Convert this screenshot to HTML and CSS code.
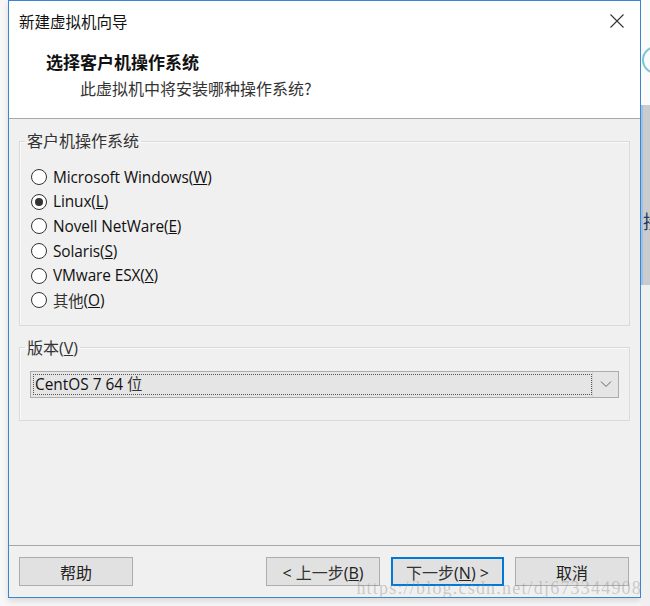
FILE: index.html
```html
<!DOCTYPE html>
<html lang="zh-CN">
<head>
  <meta charset="UTF-8" />
  <title>新建虚拟机向导</title>
  <link rel="stylesheet" href="styles.css">
</head>
<body>
  <div class="desktop">
    <div class="gutter"></div>

    <div class="window">
      <div class="titlebar">
        <span class="title">新建虚拟机向导</span>
        <button class="close-btn" aria-label="关闭">
          <svg width="14" height="14" viewBox="0 0 14 14">
            <path d="M0.5 0.5 L13.5 13.5 M13.5 0.5 L0.5 13.5" stroke="#333" stroke-width="1.1" fill="none"/>
          </svg>
        </button>
      </div>

      <div class="header">
        <div class="heading">选择客户机操作系统</div>
        <div class="subheading">此虚拟机中将安装哪种操作系统?</div>
      </div>

      <div class="content">
        <fieldset class="group">
          <legend>客户机操作系统</legend>
          <label class="radio"><span class="dot"></span>Microsoft Windows(<u>W</u>)</label>
          <label class="radio"><span class="dot checked"></span>Linux(<u>L</u>)</label>
          <label class="radio"><span class="dot"></span>Novell NetWare(<u>E</u>)</label>
          <label class="radio"><span class="dot"></span>Solaris(<u>S</u>)</label>
          <label class="radio"><span class="dot"></span>VMware ESX(<u>X</u>)</label>
          <label class="radio"><span class="dot"></span><span class="cjk">其他</span>(<u>O</u>)</label>
        </fieldset>

        <fieldset class="group version">
          <legend><span class="cjk">版本</span>(<u>V</u>)</legend>
          <div class="combo">
            <div class="combo-text">CentOS 7 64 <span class="cjk">位</span></div>
            <div class="combo-arrow">
              <svg width="12" height="8" viewBox="0 0 12 8">
                <path d="M1 1.5 L6 6.5 L11 1.5" stroke="#666" stroke-width="1" fill="none"/>
              </svg>
            </div>
          </div>
        </fieldset>
      </div>

      <div class="footer">
        <button class="btn">帮助</button>
        <div class="spacer"></div>
        <button class="btn">&lt; <span class="cjk">上一步</span>(<u>B</u>)</button>
        <button class="btn primary"><span class="cjk">下一步</span>(<u>N</u>) &gt;</button>
        <button class="btn">取消</button>
        <div class="watermark">https://blog.csdn.net/dj673344908</div>
      </div>
    </div>

    <div class="side">
      <div class="side-top"><div class="ring"></div></div>
      <div class="side-gray"><span class="side-char">接</span></div>
      <div class="side-rest"></div>
    </div>
  </div>
</body>
</html>
```

FILE: styles.css
```css
body {
  margin: 0;
  background: #f6f6f6;
  font-family: "Open Sans", "Noto Sans CJK SC", sans-serif;
  color: #000;
}

.desktop {
  width: 650px;
  height: 606px;
  display: flex;
  overflow: hidden;
}

.gutter {
  width: 8px;
  flex: none;
  background: #f7f7f7;
}

.window {
  width: 633px;
  height: 598px;
  flex: none;
  box-sizing: border-box;
  border: 1px solid #3b86d4;
  background: #f0f0f0;
  display: flex;
  flex-direction: column;
  box-shadow: 0 3px 6px rgba(0, 0, 0, 0.12);
}

/* title bar + header */

.titlebar {
  height: 39px;
  background: #fff;
  display: flex;
  align-items: center;
  padding-left: 10px;
}

.title {
  font-family: "Noto Sans CJK SC", sans-serif;
  font-size: 15.5px;
  color: #111;
  flex: 1;
}

.close-btn {
  background: none;
  border: none;
  padding: 0;
  width: 46px;
  height: 39px;
  display: flex;
  align-items: center;
  justify-content: center;
}

.header {
  height: 78px;
  background: #fff;
  border-bottom: 1px solid #a8a8a8;
  padding-left: 37px;
}

.heading {
  font-family: "Noto Sans CJK SC", sans-serif;
  font-weight: bold;
  font-size: 17px;
  line-height: 24px;
  margin-top: 10px;
  color: #111;
}

.subheading {
  font-family: "Noto Sans CJK SC", sans-serif;
  font-size: 16px;
  line-height: 24px;
  margin-top: 2px;
  padding-left: 34px;
  color: #333;
}

/* body */

.content {
  flex: 1;
  padding: 12px 10px 0 10px;
}

.group {
  margin: 0;
  padding: 14px 11px 12px 11px;
  border: 1px solid #dadada;
  box-shadow: inset 1px 1px 0 #fafafa;
}

.group legend {
  font-size: 16px;
  line-height: 20px;
  padding: 0 2px;
  margin-left: -6px;
  color: #333;
}

.cjk {
  font-family: "Noto Sans CJK SC", sans-serif;
  color: #333;
}

.radio {
  display: flex;
  align-items: center;
  height: 24.6px;
  font-size: 15.4px;
  letter-spacing: -0.1px;
  color: #111;
}

.dot {
  width: 14px;
  height: 14px;
  border: 1px solid #333;
  border-radius: 50%;
  background: #fff;
  margin-right: 6px;
  display: flex;
  align-items: center;
  justify-content: center;
}

.dot.checked::after {
  content: "";
  width: 8px;
  height: 8px;
  border-radius: 50%;
  background: #333;
}

.version {
  margin-top: 11px;
  padding-top: 13px;
  padding-bottom: 22px;
}

.combo {
  margin: 0 -1px;
  height: 27px;
  box-sizing: border-box;
  border: 1px solid #acacac;
  background: #e5e5e5;
  display: flex;
}

.combo-text {
  flex: 1;
  margin: 2px 0 2px 2px;
  border: 1px dotted #555;
  font-size: 15.4px;
  line-height: 17px;
  padding-left: 1px;
  color: #111;
}

.combo-arrow {
  width: 25px;
  border-left: 1px solid #d6d6d6;
  display: flex;
  align-items: center;
  justify-content: center;
}

/* footer */

.footer {
  position: relative;
  height: 52px;
  box-sizing: border-box;
  border-top: 1px solid #a8a8a8;
  padding: 11px 11px 0 10px;
  display: flex;
  align-items: flex-start;
  gap: 11px;
}

.spacer {
  flex: 1;
}

.btn {
  width: 114px;
  height: 29px;
  border: 1px solid #adadad;
  background: #e1e1e1;
  font-family: "Open Sans", "Noto Sans CJK SC", sans-serif;
  font-size: 16px;
  color: #222;
  padding: 0;
}

.btn.primary {
  width: 113px;
  border-color: #0078d7;
  box-shadow: inset 0 0 0 1px #0078d7;
}

.watermark {
  position: absolute;
  right: -2px;
  top: 32px;
  font-family: "Liberation Serif", serif;
  font-size: 18px;
  letter-spacing: 1.2px;
  color: rgba(140, 140, 140, 0.4);
  white-space: nowrap;
}

/* desktop behind the dialog */

.side {
  flex: 1;
  display: flex;
  flex-direction: column;
  background: #f0f0f0;
}

.side-top {
  height: 105px;
  background: #fbfbfb;
  overflow: hidden;
}

.ring {
  width: 24px;
  height: 24px;
  border: 2px solid #7cc6d6;
  border-radius: 50%;
  margin: 46px 0 0 1px;
}

.side-gray {
  height: 180px;
  background: #cbcbcb;
  overflow: hidden;
  border-left: 2px solid #9cc3e6;
}

.side-char {
  display: block;
  margin-top: 102px;
  font-family: "Noto Sans CJK SC", sans-serif;
  font-size: 19px;
  color: #1d3a66;
}

.side-rest {
  flex: 1;
}
```
